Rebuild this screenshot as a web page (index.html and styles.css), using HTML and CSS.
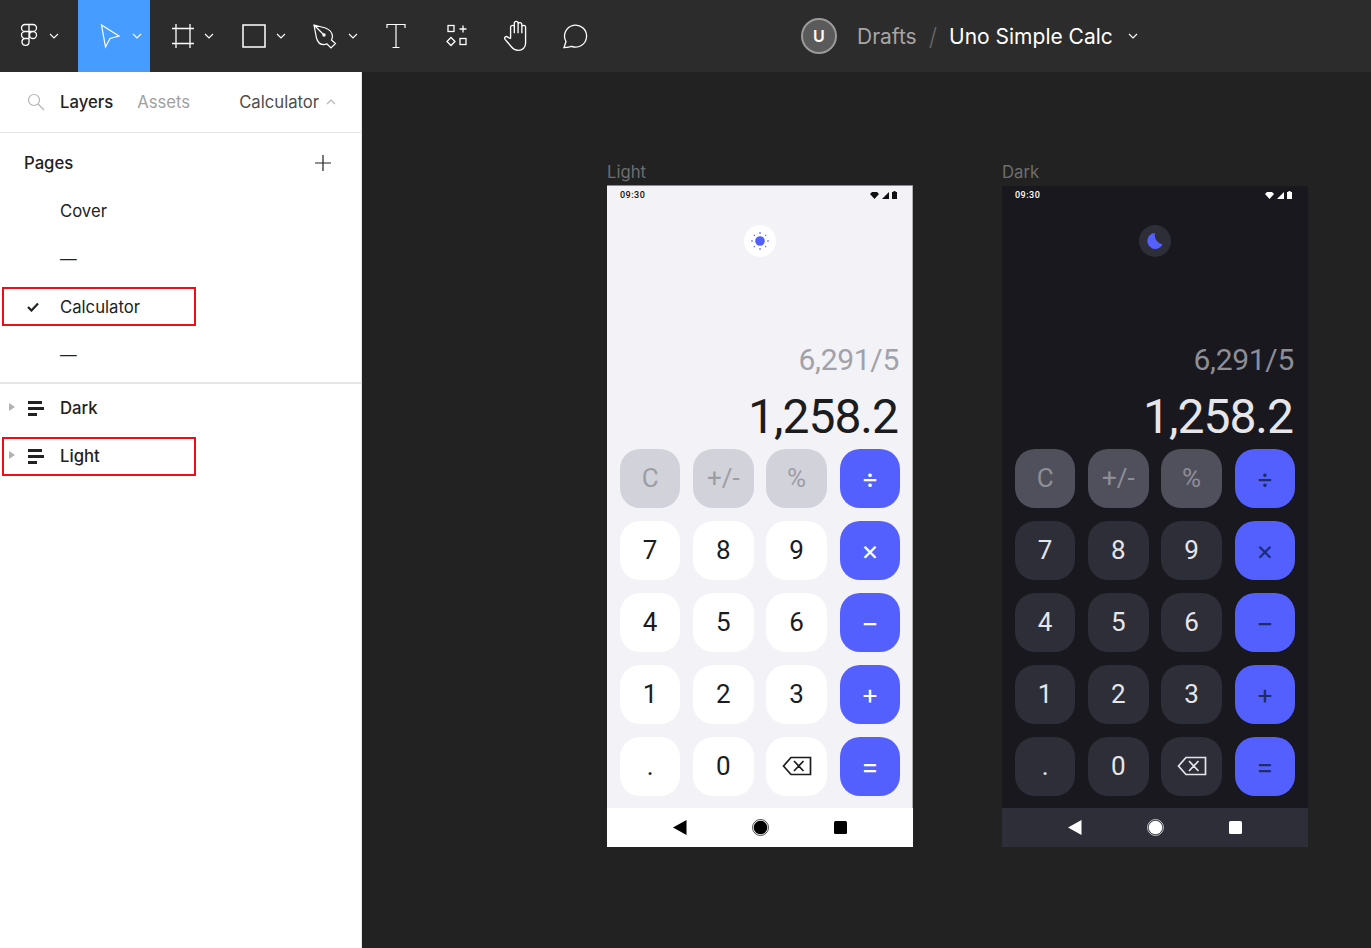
FILE: index.html
```html
<!DOCTYPE html>
<html lang="en">
<head>
  <meta charset="UTF-8" />
  <title>Uno Simple Calc</title>
  <link rel="stylesheet" href="styles.css">
</head>
<body>

  <svg class="icon-defs" width="0" height="0">
    <defs>
      <symbol id="chev" viewBox="0 0 10 6"><path d="M1 1l4 4 4-4" fill="none" stroke="currentColor" stroke-width="1.100"/></symbol>
      <symbol id="layer" viewBox="0 0 16 15"><path d="M0 0h14v3H0zM0 6h16v3H0zM0 12h9v3H0z" fill="currentColor"/></symbol>
      <symbol id="wifi" viewBox="0 0 9 7"><path d="M0 2L2 0h5l2 2-4.500 5z" fill="currentColor"/></symbol>
      <symbol id="signal" viewBox="0 0 7 7"><path d="M7 0v7H0z" fill="currentColor"/></symbol>
      <symbol id="battery" viewBox="0 0 5 8"><path d="M1.500 0h2v1H5v7H0V1h1.500z" fill="currentColor"/></symbol>
      <symbol id="backspace" viewBox="0 0 30 20"><path d="M1.500 10L9 1.500h19.500v17H9z M12 5l9.500 10 M21.500 5L12 15" fill="none" stroke="currentColor" stroke-width="1.700"/></symbol>
    </defs>
  </svg>

  <header class="toolbar">
    <div class="tools">
      <div class="tool tool-menu">
        <svg width="18" height="26" viewBox="0 0 18 26" fill="none" stroke="#fff" stroke-width="1.300"><path d="M9 1.500H5a3.500 3.500 0 0 0 0 7h4zM9 1.500h4a3.500 3.500 0 0 1 0 7H9zM9 8.500H5a3.500 3.500 0 0 0 0 7h4zM9 15.500H5a3.500 3.500 0 1 0 4 3.500zM16.500 12a3.500 3.500 0 1 1-7 0 3.500 3.500 0 0 1 7 0z"/></svg>
        <svg class="chev" width="10" height="6"><use href="#chev"/></svg>
      </div>
      <div class="tool tool-move">
        <svg width="22" height="26" viewBox="0 0 22 26" fill="none" stroke="#fff" stroke-width="1.200"><path d="M1.500 2l4 22 4.500-8.500L19 13z"/></svg>
        <svg class="chev" width="10" height="6"><use href="#chev"/></svg>
      </div>
      <div class="tool tool-frame">
        <svg width="24" height="26" viewBox="0 0 24 26" fill="none" stroke="#fff" stroke-width="1.300"><path d="M5 1v24M19 1v24M1 5.500h22M1 20.500h22"/></svg>
        <svg class="chev" width="10" height="6"><use href="#chev"/></svg>
      </div>
      <div class="tool tool-rect">
        <svg width="24" height="24" viewBox="0 0 24 24" fill="none" stroke="#fff" stroke-width="1.500"><rect x="1" y="1" width="22" height="22"/></svg>
        <svg class="chev" width="10" height="6"><use href="#chev"/></svg>
      </div>
      <div class="tool tool-pen">
        <svg width="24" height="26" viewBox="0 0 24 26" fill="none" stroke="#fff" stroke-width="1.200"><path d="M1 2l11.500 3c4 1.500 7 5 7 9l-1 3 4 3.500-4.500 4.500-4-4-3 .7c-4 0-6.500-2.500-7.500-6.700zM1 2l9.500 9.500"/><circle cx="11" cy="12" r="1.700" fill="#fff" stroke="none"/></svg>
        <svg class="chev" width="10" height="6"><use href="#chev"/></svg>
      </div>
      <div class="tool tool-text">
        <svg width="20" height="26" viewBox="0 0 20 26" fill="none" stroke="#fff" stroke-width="1.200"><path d="M1 5V1.500h18V5M10 1.500v23M6.500 24.500h7"/></svg>
      </div>
      <div class="tool tool-res">
        <svg width="22" height="24" viewBox="0 0 22 24" fill="none" stroke="#fff" stroke-width="1.300"><rect x="2" y="1.500" width="6" height="6"/><path d="M17 1.500v7M13.500 5h7"/><path d="M5 13.500l4 4-4 4-4-4z"/><rect x="14" y="14.500" width="6" height="6"/></svg>
      </div>
      <div class="tool tool-hand">
        <svg width="26" height="32" viewBox="0 1 22 29" fill="none" stroke="#fff" stroke-width="1.200"><path d="M7 18V7.500a1.700 1.700 0 0 1 3.400 0V13M10.400 13V4a1.700 1.700 0 0 1 3.400 0v9M13.800 13V5a1.700 1.700 0 0 1 3.400 0v8M17.200 13V7.500a1.700 1.700 0 0 1 3.400 0V22c0 4-3 6.500-6.600 6.500-3.200 0-5-1.500-6.500-3.500L2 18.500c-1.200-1.500.8-3.300 2.200-2.200L7 18"/></svg>
      </div>
      <div class="tool tool-comment">
        <svg width="26" height="26" viewBox="0 0 26 26" fill="none" stroke="#fff" stroke-width="1.300"><path d="M2 24.500l2-6A11 11 0 1 1 9.500 23.300c-1.500.6-5 1-7.500 1.200z"/></svg>
      </div>
    </div>
    <div class="file-title">
      <span class="avatar">U</span>
      <span class="drafts">Drafts</span>
      <span class="slash">/</span>
      <span class="file-name">Uno Simple Calc</span>
      <svg class="chev" width="10" height="6"><use href="#chev"/></svg>
    </div>
  </header>

  <div class="main">
    <aside class="sidebar">
      <div class="tabs">
        <svg class="search" width="18" height="18" viewBox="0 0 18 18" fill="none" stroke="#b3b3b3" stroke-width="1.200"><circle cx="7" cy="7" r="5.500"/><path d="M11 11l6 6"/></svg>
        <span class="tab-active">Layers</span>
        <span class="tab">Assets</span>
        <span class="tab-page">Calculator</span>
        <svg class="chev-up" width="10" height="6"><use href="#chev"/></svg>
      </div>
      <div class="pages">
        <div class="pages-head">
          <span>Pages</span>
          <svg width="18" height="18" viewBox="0 0 18 18" stroke="#222" stroke-width="1.200"><path d="M9 1v16M1 9h16"/></svg>
        </div>
        <div class="row">Cover</div>
        <div class="row">—</div>
        <div class="row marked marked-page">
          <svg class="check" width="12" height="10" viewBox="0 0 12 10" fill="none" stroke="#222" stroke-width="2.200"><path d="M1 5l3.500 3.500L11 1.500"/></svg>
          Calculator
        </div>
        <div class="row">—</div>
      </div>
      <div class="layers">
        <div class="row layer">
          <span class="caret"></span>
          <svg class="layer-icon" width="16" height="15"><use href="#layer"/></svg>
          Dark
        </div>
        <div class="row layer marked">
          <span class="caret"></span>
          <svg class="layer-icon" width="16" height="15"><use href="#layer"/></svg>
          Light
        </div>
      </div>
    </aside>

    <main class="canvas">

      <section class="artboard artboard-light">
        <div class="artboard-label">Light</div>
        <div class="phone">
          <div class="status">
            <span>09:30</span>
            <span class="status-icons">
              <svg width="9" height="7"><use href="#wifi"/></svg>
              <svg width="7" height="7"><use href="#signal"/></svg>
              <svg width="5" height="8"><use href="#battery"/></svg>
            </span>
          </div>
          <div class="toggle">
            <svg width="18" height="18" viewBox="0 0 18 18" fill="#5460fe" stroke="#5460fe" stroke-width="1.100"><circle cx="9" cy="9" r="4.800" stroke="none"/><path d="M9 0v2M9 16v2M0 9h2M16 9h2M2.800 2.800l1.100 1.100M14.100 14.100l1.100 1.100M2.800 15.200l1.100-1.100M14.100 3.900l1.100-1.100"/></svg>
          </div>
          <div class="expr">6,291/5</div>
          <div class="result">1,258.2</div>
          <div class="keys">
            <div class="key fn">C</div><div class="key fn">+/-</div><div class="key fn">%</div><div class="key op">÷</div>
            <div class="key">7</div><div class="key">8</div><div class="key">9</div><div class="key op">×</div>
            <div class="key">4</div><div class="key">5</div><div class="key">6</div><div class="key op">−</div>
            <div class="key">1</div><div class="key">2</div><div class="key">3</div><div class="key op">+</div>
            <div class="key">.</div><div class="key">0</div><div class="key"><svg width="30" height="20"><use href="#backspace"/></svg></div><div class="key op">=</div>
          </div>
          <div class="navbar">
            <svg width="14" height="15" viewBox="0 0 14 15"><path d="M13.500 0v15L0 7.500z" fill="currentColor"/></svg>
            <svg width="17" height="17" viewBox="0 0 17 17"><circle cx="8.500" cy="8.500" r="8" fill="none" stroke="currentColor" stroke-width=".7"/><circle cx="8.500" cy="8.500" r="6.800" fill="currentColor"/></svg>
            <svg width="13" height="13" viewBox="0 0 13 13"><rect width="13" height="13" rx="1.500" fill="currentColor"/></svg>
          </div>
        </div>
      </section>

      <section class="artboard artboard-dark">
        <div class="artboard-label">Dark</div>
        <div class="phone">
          <div class="status">
            <span>09:30</span>
            <span class="status-icons">
              <svg width="9" height="7"><use href="#wifi"/></svg>
              <svg width="7" height="7"><use href="#signal"/></svg>
              <svg width="5" height="8"><use href="#battery"/></svg>
            </span>
          </div>
          <div class="toggle">
            <svg width="16" height="18" viewBox="0 0 16 18"><path d="M8 1a8 8 0 1 0 7.500 11.500A9.500 9.500 0 0 1 8 1z" fill="#5460fe"/></svg>
          </div>
          <div class="expr">6,291/5</div>
          <div class="result">1,258.2</div>
          <div class="keys">
            <div class="key fn">C</div><div class="key fn">+/-</div><div class="key fn">%</div><div class="key op">÷</div>
            <div class="key">7</div><div class="key">8</div><div class="key">9</div><div class="key op">×</div>
            <div class="key">4</div><div class="key">5</div><div class="key">6</div><div class="key op">−</div>
            <div class="key">1</div><div class="key">2</div><div class="key">3</div><div class="key op">+</div>
            <div class="key">.</div><div class="key">0</div><div class="key"><svg width="30" height="20"><use href="#backspace"/></svg></div><div class="key op">=</div>
          </div>
          <div class="navbar">
            <svg width="14" height="15" viewBox="0 0 14 15"><path d="M13.500 0v15L0 7.500z" fill="currentColor"/></svg>
            <svg width="17" height="17" viewBox="0 0 17 17"><circle cx="8.500" cy="8.500" r="8" fill="none" stroke="currentColor" stroke-width=".7"/><circle cx="8.500" cy="8.500" r="6.800" fill="currentColor"/></svg>
            <svg width="13" height="13" viewBox="0 0 13 13"><rect width="13" height="13" rx="1.500" fill="currentColor"/></svg>
          </div>
        </div>
      </section>

    </main>
  </div>

</body>
</html>
```

FILE: styles.css
```css
* {
  margin: 0;
  padding: 0;
  box-sizing: border-box;
}

html, body {
  height: 100%;
  overflow: hidden;
  font-family: Inter, "Liberation Sans", sans-serif;
}

body {
  display: flex;
  flex-direction: column;
  background: #222222;
}

.icon-defs {
  position: absolute;
}

svg {
  display: block;
}

/* top bar */

.toolbar {
  height: 72px;
  flex: none;
  background: #2c2c2c;
  color: #fff;
  display: flex;
  align-items: center;
  position: relative;
}

.tools {
  display: flex;
  height: 100%;
}

.tool {
  display: flex;
  align-items: center;
  height: 100%;
}

.chev {
  color: #fff;
}

.tool-menu { width: 78px; gap: 11px; padding-left: 20px; }
.tool-move { width: 72px; background: #479cff; gap: 10px; padding-left: 22px; }
.tool-frame { width: 78px; gap: 9px; padding-left: 21px; }
.tool-rect { width: 70px; gap: 10px; padding-left: 14px; }
.tool-pen { width: 70px; gap: 11px; padding-left: 15px; }
.tool-text { width: 50px; padding-left: 18px; }
.tool-res { width: 70px; padding-left: 28px; }
.tool-hand { width: 60px; padding-left: 14px; }
.tool-comment { width: 60px; padding-left: 14px; }

.file-title {
  position: absolute;
  left: 801px;
  top: 0;
  height: 72px;
  display: flex;
  align-items: center;
  font-size: 21px;
}

.avatar {
  width: 36px;
  height: 36px;
  border-radius: 50%;
  background: #5a5a5a;
  border: 2px solid #9a9a9a;
  display: flex;
  align-items: center;
  justify-content: center;
  font-size: 16px;
  font-weight: 600;
  margin-right: 20px;
}

.drafts {
  color: #a6a6a6;
}

.slash {
  color: #666;
  font-size: 24px;
  font-weight: 300;
  margin: 0 12px;
}

.file-name {
  margin-right: 15px;
}

/* left panel */

.main {
  flex: 1;
  display: flex;
  min-height: 0;
}

.sidebar {
  width: 362px;
  flex: none;
  background: #fff;
  border-right: 1px solid #e5e5e5;
  color: #222;
  font-size: 16.700px;
  position: relative;
}

.tabs {
  height: 61px;
  border-bottom: 1px solid #e5e5e5;
  display: flex;
  align-items: center;
  padding-left: 27px;
}

.search {
  margin-right: 15px;
}

.tab-active {
  font-weight: 500;
  margin-right: 24px;
}

.tab {
  color: #a0a0a0;
  margin-right: 49px;
}

.tab-page {
  color: #4d4d4d;
  margin-right: 7px;
}

.chev-up {
  color: #b3b3b3;
  transform: rotate(180deg);
}

.pages {
  padding-top: 6px;
  border-bottom: 2px solid #e5e5e5;
  height: 251px;
}

.pages-head {
  height: 48px;
  display: flex;
  align-items: center;
  justify-content: space-between;
  padding: 0 29px 0 24px;
  font-weight: 500;
}

.row {
  height: 48px;
  display: flex;
  align-items: center;
  padding-left: 60px;
  position: relative;
}

.layer {
  font-weight: 500;
}

/* the red marks that are on the screenshot */
.marked::after {
  content: "";
  box-sizing: border-box;
  position: absolute;
  left: 2px;
  top: 5px;
  width: 194px;
  height: 39px;
  border: 2px solid #ee0e16;
}

.marked-page::after {
  top: 4px;
}

.check {
  position: absolute;
  left: 27px;
  top: 19px;
}

.caret {
  position: absolute;
  left: 9px;
  top: 19px;
  border-left: 6px solid #b3b3b3;
  border-top: 4.500px solid transparent;
  border-bottom: 4.500px solid transparent;
}

.layer-icon {
  position: absolute;
  left: 28px;
  top: 17px;
}

/* canvas with the two frames */

.canvas {
  flex: 1;
  position: relative;
}

.artboard {
  position: absolute;
  top: 91px;
  width: 306px;
}

.artboard-light { left: 245px; }
.artboard-dark { left: 640px; }

.artboard-label {
  height: 23px;
  color: #6e6e6e;
  font-size: 16.700px;
  line-height: 18px;
}

.phone {
  width: 306px;
  height: 661px;
  display: flex;
  flex-direction: column;
  font-family: Roboto, sans-serif;
}

.artboard-light .phone {
  background: #f2f2f7;
  color: #1c1c1e;
  box-shadow: inset -1px 0 0 #b0b0b0, 0 -1px 0 #8a8a8a;
}

.artboard-dark .phone {
  background: #18181e;
  color: #e5e5ea;
}

.status {
  height: 18px;
  flex: none;
  padding: 0 16px 0 13px;
  display: flex;
  align-items: center;
  justify-content: space-between;
  font-size: 9px;
  font-weight: 500;
  letter-spacing: .5px;
}

.artboard-light .status { color: #111; }
.artboard-dark .status { color: #fff; }

.status-icons {
  display: flex;
  align-items: center;
  gap: 3px;
}

.toggle {
  width: 32px;
  height: 32px;
  flex: none;
  margin: 21px auto 0;
  border-radius: 50%;
  display: flex;
  align-items: center;
  justify-content: center;
}

.artboard-light .toggle { background: #fff; }
.artboard-dark .toggle { background: #2e2e38; }

.expr {
  margin-top: 85px;
  padding-right: 14px;
  text-align: right;
  font-size: 30px;
  letter-spacing: -.3px;
  line-height: 36px;
  height: 36px;
}

.artboard-light .expr { color: #a1a1aa; }
.artboard-dark .expr { color: #8e8e96; }

.result {
  margin-top: 11px;
  padding-right: 15px;
  text-align: right;
  font-size: 48px;
  letter-spacing: -1px;
  line-height: 56px;
  height: 56px;
}

.keys {
  margin-top: 4px;
  padding: 0 13px;
  display: grid;
  grid-template-columns: repeat(4, 1fr);
  grid-auto-rows: 58.500px;
  gap: 13.500px 12.900px;
}

.key {
  border-radius: 20px;
  display: flex;
  align-items: center;
  justify-content: center;
  font-size: 26px;
}

.artboard-light .key { background: #fff; }
.artboard-dark .key { background: #2e2e38; }

.artboard-light .key.fn { background: #d2d3da; color: #9d9da6; }
.artboard-dark .key.fn { background: #50505c; color: #8e8e96; }

.key.op {
  font-family: Inter, sans-serif;
  font-size: 27px;
}

.artboard-light .key.op { background: #5460fe; color: #fff; }
.artboard-dark .key.op { background: #5460fe; color: #1c2c6c; }

.navbar {
  margin-top: auto;
  height: 39px;
  flex: none;
  display: flex;
  align-items: center;
  justify-content: center;
  gap: 65px;
}

.artboard-light .navbar { background: #fff; color: #000; }
.artboard-dark .navbar { background: #2e2e38; color: #fff; }
```
